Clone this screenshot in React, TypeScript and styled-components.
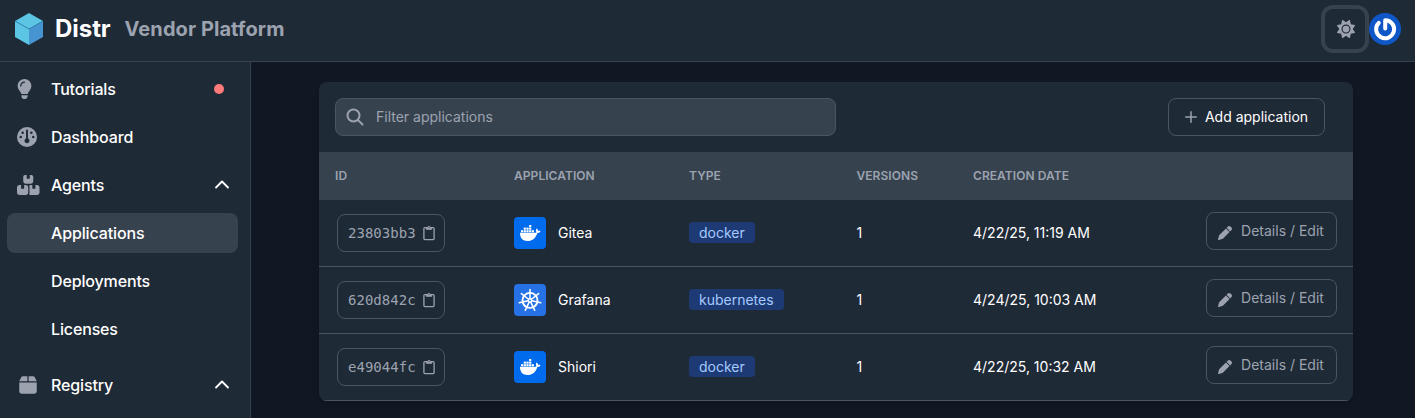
import React from 'react';
import styled, { createGlobalStyle } from 'styled-components';
import { FaBox, FaBoxesStacked, FaGauge, FaLightbulb, FaPen, FaSun } from 'react-icons/fa6';

const c = {
  bg: '#111723',
  panel: '#1f2a37',
  raised: '#37424f',
  line: '#4b5662',
  muted: '#9ca3af',
};

const Global = createGlobalStyle`
  *, *::before, *::after { box-sizing: border-box; }
  body {
    margin: 0;
    background: ${c.bg};
    color: #fff;
    font: 400 14px/20px Inter, sans-serif;
    overflow: hidden;
  }
  button, input { font: inherit; color: inherit; background: none; }
  svg { display: block; flex: none; }
`;

const Page = styled.div`
  height: 418px;
  display: flex;
  flex-direction: column;
  overflow: hidden;
`;

const Header = styled.header`
  flex: none;
  height: 62px;
  display: flex;
  align-items: center;
  justify-content: space-between;
  padding: 0 14px 4px 13px;
  background: ${c.panel};
  border-bottom: 1px solid ${c.raised};
`;

const Brand = styled.div`
  display: flex;
  align-items: center;
`;

const BrandName = styled.span`
  margin-left: 10px;
  font-size: 24px;
  line-height: 32px;
  font-weight: 700;
  letter-spacing: -0.05px;
`;

const BrandSub = styled.span`
  margin-left: 14px;
  padding-top: 1px;
  font-size: 20px;
  line-height: 28px;
  font-weight: 700;
  letter-spacing: 0.07px;
  color: ${c.muted};
`;

const Actions = styled.div`
  display: flex;
  align-items: center;
`;

const ThemeButton = styled.button`
  width: 48px;
  height: 48px;
  display: grid;
  place-items: center;
  padding: 0 0 0 2px;
  border: 4px solid ${c.raised};
  border-radius: 12px;
  color: ${c.muted};
`;

const Body = styled.div`
  flex: 1;
  display: flex;
  min-height: 0;
`;

const Sidebar = styled.nav`
  width: 251px;
  flex: none;
  display: flex;
  flex-direction: column;
  gap: 8px;
  padding: 7px 12px 0 7px;
  background: ${c.panel};
  border-right: 1px solid ${c.raised};
`;

const NavItem = styled.a<{ $active?: boolean; $section?: boolean }>`
  flex: none;
  height: 40px;
  display: flex;
  align-items: center;
  padding: 0 8px 0 10px;
  margin-top: ${(p) => (p.$section ? 8 : 0)}px;
  border-radius: 8px;
  background: ${(p) => (p.$active ? c.raised : 'transparent')};
  font-size: 16px;
  line-height: 24px;
  font-weight: 500;
  letter-spacing: -0.14px;
`;

const NavIcon = styled.span<{ $w?: number; $inset?: number }>`
  width: 34px;
  padding-left: ${(p) => p.$inset ?? 0}px;
  color: ${c.muted};
  svg { height: 20px; width: ${(p) => p.$w ?? 20}px; }
`;

const NavLabel = styled.span`
  flex: 1;
`;

const Dot = styled.span`
  width: 10px;
  height: 10px;
  margin-right: 6px;
  border-radius: 50%;
  background: #ff7b7b;
`;

const Main = styled.main`
  flex: 1;
  padding: 20px 62px 0 68px;
`;

const Card = styled.section`
  height: 319px;
  background: ${c.panel};
  border-radius: 8px;
  overflow: hidden;
  box-shadow: 0 4px 6px -1px rgba(0, 0, 0, 0.1);
`;

const Toolbar = styled.div`
  height: 70px;
  display: flex;
  align-items: center;
  justify-content: space-between;
  padding: 0 28px 0 16px;
`;

const SearchBox = styled.label`
  width: 501px;
  height: 38px;
  display: flex;
  align-items: center;
  gap: 11px;
  padding: 0 9px;
  border: 1px solid ${c.line};
  border-radius: 8px;
  background: ${c.raised};
  color: ${c.muted};
`;

const SearchInput = styled.input`
  flex: 1;
  padding: 0;
  border: 0;
  outline: 0;
  &::placeholder { color: ${c.muted}; opacity: 1; }
`;

const OutlineButton = styled.button<{ $w: number; $muted?: boolean }>`
  width: ${(p) => p.$w}px;
  height: 38px;
  display: flex;
  align-items: center;
  justify-content: center;
  padding: 0;
  border: 1px solid ${c.line};
  border-radius: 8px;
  white-space: nowrap;
  color: ${(p) => (p.$muted ? c.muted : '#fff')};
`;

const AddButton = styled(OutlineButton)`
  gap: 8px;
  svg { color: ${c.muted}; }
`;

const IdButton = styled(OutlineButton)`
  margin-left: 2px;
  padding-left: 10px;
  justify-content: flex-start;
  gap: 7px;
  font-family: 'DejaVu Sans Mono', monospace;
  letter-spacing: 0.02px;
`;

const EditButton = styled(OutlineButton)`
  gap: 9px;
  margin-bottom: 4px;
  svg { margin: 4px 0 0 -1px; }
`;

const Table = styled.table`
  width: 100%;
  table-layout: fixed;
  border-collapse: separate;
  border-spacing: 0;
`;

const Th = styled.th<{ $w: number }>`
  width: ${(p) => p.$w}px;
  height: 48px;
  padding: 0 16px;
  background: ${c.raised};
  color: ${c.muted};
  font-size: 12px;
  line-height: 16px;
  font-weight: 600;
  letter-spacing: 0.06px;
  text-align: left;
  text-transform: uppercase;
`;

const Td = styled.td`
  height: 67px;
  padding: 0 16px;
  border-bottom: 1px solid ${c.line};
  white-space: nowrap;
`;

const AppCell = styled.div`
  display: flex;
  align-items: center;
  gap: 12px;
`;

const Tile = styled.span<{ $kube: boolean }>`
  width: 32px;
  height: 32px;
  border-radius: 4px;
  background: ${(p) => (p.$kube ? '#2671e5' : '#006bed')};
`;

const Badge = styled.span`
  display: block;
  width: fit-content;
  height: 21px;
  margin-bottom: 1px;
  padding: 0 10px;
  border-radius: 4px;
  background: #1e3a75;
  color: #a4cafe;
  line-height: 22px;
`;

const Logo = () => (
  <svg width="32" height="34" viewBox="0 0 32 34">
    <path d="M16 1 30 9 16 17 2 9Z" fill="#5bc5e3" />
    <path d="M2 9 16 17V33L2 25Z" fill="#5bc5e3" />
    <path d="M30 9 16 17V33L30 25Z" fill="#4695d1" />
    <path d="M2 9 16 17 30 9" fill="none" stroke="#2b83b4" strokeWidth=".8" />
  </svg>
);

const Avatar = () => (
  <svg width="32" height="32" viewBox="0 0 32 32">
    <circle cx="16" cy="16" r="16" fill="#0f57c7" />
    <path
      d="M16.2 15.6V7.2A9 9 0 1 1 9.8 9.8"
      fill="none"
      stroke="#fff"
      strokeWidth="4"
      strokeLinecap="round"
      strokeLinejoin="round"
    />
  </svg>
);

const Chevron = () => (
  <svg width="16" height="10" viewBox="0 0 16 10" fill="none" stroke="#fff" strokeWidth="1.8" strokeLinecap="round" strokeLinejoin="round">
    <path d="m2 7.5 6-6 6 6" />
  </svg>
);

const PlusIcon = () => (
  <svg width="12" height="12" viewBox="0 0 12 12" fill="none" stroke="currentColor" strokeWidth="1.5" strokeLinecap="round">
    <path d="M6 .8v10.4M.8 6h10.4" />
  </svg>
);

const SearchIcon = () => (
  <svg width="20" height="20" viewBox="0 0 24 24" fill="none" stroke="currentColor" strokeWidth="2.4" strokeLinecap="round">
    <path d="m21 21-4.7-4.7M17.4 10.2a7.2 7.2 0 1 1-14.4 0 7.2 7.2 0 0 1 14.4 0Z" />
  </svg>
);

const Clipboard = () => (
  <svg width="12" height="16" viewBox="0 0 12 16" fill="none" stroke="currentColor" strokeWidth="1.3">
    <rect x=".9" y="2.6" width="10.2" height="12" rx="1" />
    <path d="M3.3 2.4h1.2a1.6 1.6 0 0 1 3 0h1.2v2.1H3.3Z" fill="currentColor" strokeWidth=".6" />
    <circle cx="6" cy="2.5" r=".6" fill={c.panel} stroke="none" />
  </svg>
);

const containers: [number, number][] = [
  [15.1, 8],
  [9.7, 10.6], [12.4, 10.6], [15.1, 10.6],
  [7, 13.2], [9.7, 13.2], [12.4, 13.2], [15.1, 13.2], [17.8, 13.2],
];

const Whale = () => (
  <svg width="32" height="32" viewBox="0 0 32 32" fill="#fff">
    {containers.map(([x, y]) => (
      <rect key={`${x}-${y}`} x={x} y={y} width="2.2" height="2.1" />
    ))}
    <path d="M6 15.8H20.6c.9 0 1.5-.3 1.9-.6-.9-1.2-.7-2.8.1-3.8 1 .7 1.5 1.6 1.5 2.4.8-.1 1.7 0 2.4.5-.4 1.1-1.6 1.7-3.1 1.6C21.8 20.8 18.5 24 13.5 24 8.6 24 6 21.3 6 15.8Z" />
  </svg>
);

const spokes = Array.from({ length: 7 }, (_, i) => (i * 360) / 7);

const Helm = () => (
  <svg width="32" height="32" viewBox="0 0 32 32" fill="none" stroke="#fff">
    <circle cx="16" cy="16.4" r="7.5" strokeWidth="1.9" />
    {spokes.map((a) => (
      <path key={a} d="M16 14.5V5.4" strokeWidth="1.5" strokeLinecap="round" transform={`rotate(${a} 16 16.4)`} />
    ))}
    <circle cx="16" cy="16.4" r="2.4" fill="#fff" stroke="none" />
    <circle cx="16" cy="16.4" r=".9" fill="#2671e5" stroke="none" />
  </svg>
);

const nav = [
  { label: 'Tutorials', icon: <FaLightbulb />, iconWidth: 15, dot: true },
  { label: 'Dashboard', icon: <FaGauge /> },
  { label: 'Agents', icon: <FaBoxesStacked />, iconWidth: 22.5, open: true },
  { label: 'Applications', active: true },
  { label: 'Deployments' },
  { label: 'Licenses' },
  { label: 'Registry', icon: <FaBox />, iconWidth: 18, inset: 2, open: true, section: true },
];

const columns: [string, number][] = [
  ['ID', 179],
  ['Application', 175],
  ['Type', 167.5],
  ['Versions', 116.5],
  ['Creation date', 233],
  ['', 163],
];

const rows = [
  { id: '23803bb3', name: 'Gitea', type: 'docker', date: '4/22/25, 11:19 AM' },
  { id: '620d842c', name: 'Grafana', type: 'kubernetes', date: '4/24/25, 10:03 AM' },
  { id: 'e49044fc', name: 'Shiori', type: 'docker', date: '4/22/25, 10:32 AM' },
];

export default function App() {
  return (
    <Page>
      <Global />
      <Header>
        <Brand>
          <Logo />
          <BrandName>Distr</BrandName>
          <BrandSub>Vendor Platform</BrandSub>
        </Brand>
        <Actions>
          <ThemeButton aria-label="Toggle theme"><FaSun size={18} /></ThemeButton>
          <Avatar />
        </Actions>
      </Header>
      <Body>
        <Sidebar>
          {nav.map((n) => (
            <NavItem key={n.label} $active={n.active} $section={n.section}>
              <NavIcon $w={n.iconWidth} $inset={n.inset}>{n.icon}</NavIcon>
              <NavLabel>{n.label}</NavLabel>
              {n.dot && <Dot />}
              {n.open && <Chevron />}
            </NavItem>
          ))}
        </Sidebar>
        <Main>
          <Card>
            <Toolbar>
              <SearchBox>
                <SearchIcon />
                <SearchInput placeholder="Filter applications" />
              </SearchBox>
              <AddButton $w={157}><PlusIcon />Add application</AddButton>
            </Toolbar>
            <Table>
              <thead>
                <tr>{columns.map(([t, w]) => <Th key={t} $w={w}>{t}</Th>)}</tr>
              </thead>
              <tbody>
                {rows.map((r) => (
                  <tr key={r.id}>
                    <Td><IdButton $w={108} $muted>{r.id}<Clipboard /></IdButton></Td>
                    <Td>
                      <AppCell>
                        <Tile $kube={r.type === 'kubernetes'}>
                          {r.type === 'kubernetes' ? <Helm /> : <Whale />}
                        </Tile>
                        {r.name}
                      </AppCell>
                    </Td>
                    <Td><Badge>{r.type}</Badge></Td>
                    <Td>1</Td>
                    <Td>{r.date}</Td>
                    <Td><EditButton $w={131} $muted><FaPen size={14} />Details / Edit</EditButton></Td>
                  </tr>
                ))}
              </tbody>
            </Table>
          </Card>
        </Main>
      </Body>
    </Page>
  );
}
